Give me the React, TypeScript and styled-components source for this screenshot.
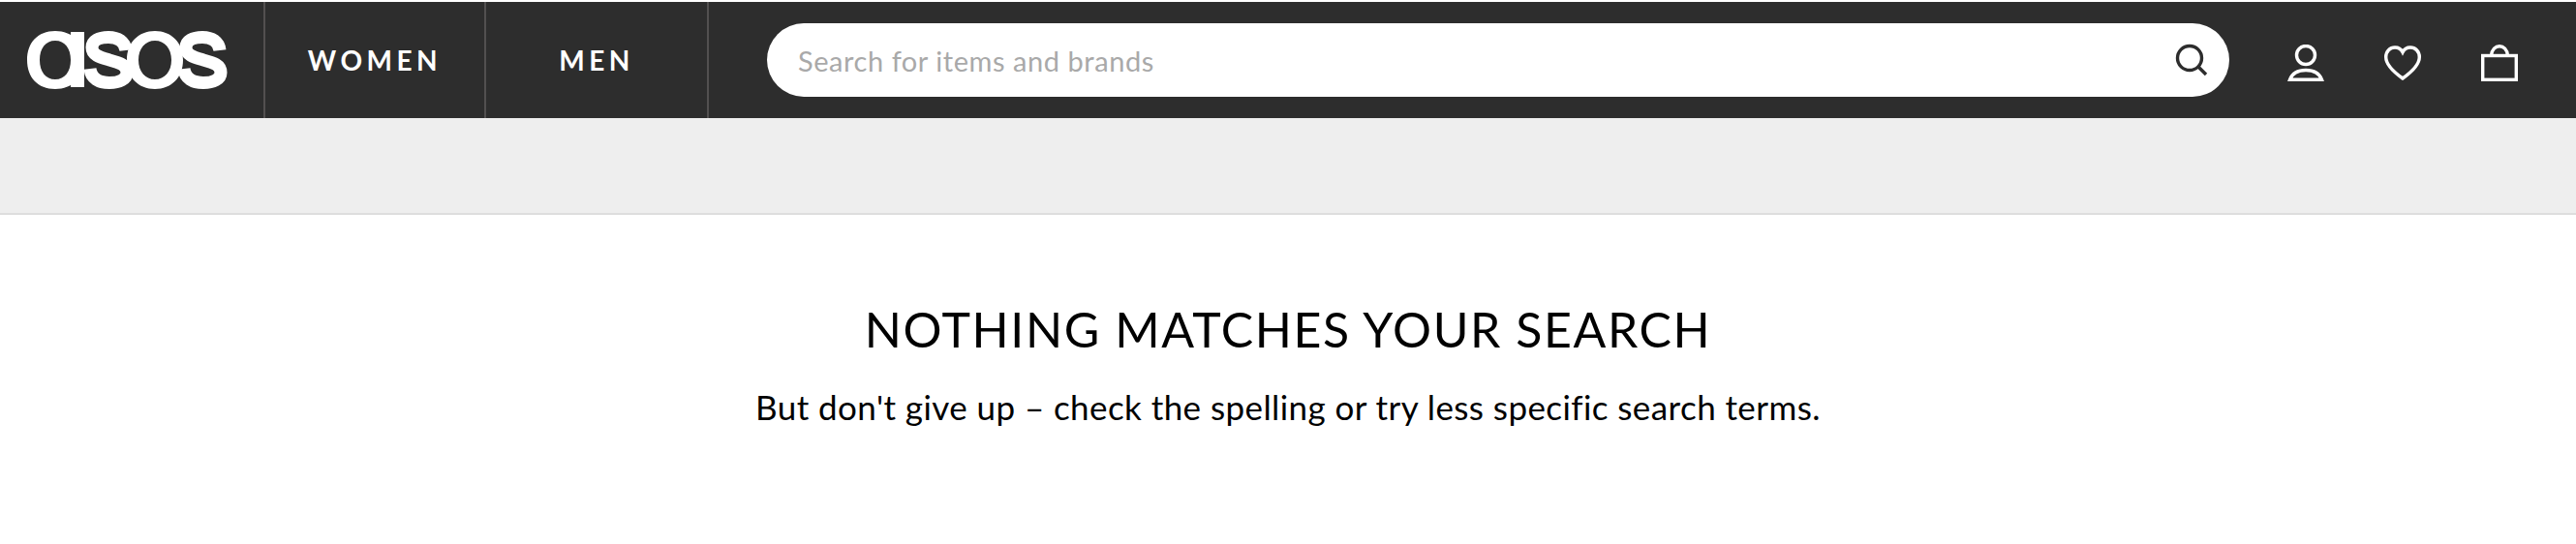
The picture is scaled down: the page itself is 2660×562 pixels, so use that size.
import React from "react";
import styled, { createGlobalStyle } from "styled-components";

const Global = createGlobalStyle`
  html, body { margin: 0; padding: 0; background: #fff; }
  body { font-family: "Lato", "Liberation Sans", sans-serif; width: 2660px; height: 562px; overflow: hidden; }
`;

const Page = styled.div`
  padding-top: 2px;
  display: flex;
  flex-direction: column;
`;

const Header = styled.header`
  height: 120px;
  background: #2d2d2d;
  display: flex;
  align-items: stretch;
`;

const LogoCell = styled.a`
  width: 272px;
  flex: none;
  display: flex;
  align-items: center;
  padding-left: 28px;
  box-sizing: border-box;
`;

const NavItem = styled.a<{ $w: number }>`
  width: ${(p) => p.$w}px;
  flex: none;
  box-sizing: border-box;
  border-left: 2px solid #525050;
  display: flex;
  align-items: center;
  justify-content: center;
  color: #fff;
  font-size: 28px;
  font-weight: 700;
  letter-spacing: 4.5px;
`;

const NavEnd = styled.div`
  width: 2px;
  background: #525050;
  flex: none;
`;

const SearchWrap = styled.div`
  margin-left: 60px;
  width: 1510px;
  height: 76px;
  flex: none;
  align-self: center;
  background: #fff;
  border-radius: 38px;
  display: flex;
  align-items: center;
  justify-content: space-between;
  padding: 0 22px 0 32px;
  box-sizing: border-box;
`;

const Placeholder = styled.span`
  color: #a9a9a9;
  font-size: 29px;
  letter-spacing: 0.55px;
`;

const Icons = styled.div`
  display: flex;
  align-items: center;
  gap: 62px;
  margin: 6px 0 0 60px;
`;

const IconBox = styled.span`
  width: 38px;
  height: 38px;
  display: block;
  color: #fff;
`;

const Band = styled.div`
  height: 98px;
  background: #eeeeee;
  border-bottom: 2px solid #dddddd;
`;

const Message = styled.main`
  display: flex;
  flex-direction: column;
  align-items: center;
  padding-top: 88px;
  color: #000;
`;

const Title = styled.h1`
  margin: 0;
  font-size: 50px;
  line-height: 60px;
  font-weight: 400;
  letter-spacing: 1.6px;
`;

const Sub = styled.p`
  margin: 28px 0 0;
  font-size: 35px;
  line-height: 44px;
  letter-spacing: 0.42px;
`;

const Logo = () => (
  <svg width="208" height="60" viewBox="0 0 208 60" role="img" aria-label="asos">
    <g fill="#fff">
      <path
        fillRule="evenodd"
        d="M29 0C11 0 0 12 0 30s11 30 29 30 29-12 29-30S47 0 29 0zm0 10c10 0 16 8 16 20s-6 20-16 20-16-8-16-20 6-20 16-20z"
      />
      <rect x="45" y="1" width="14" height="57" />
      <path
        fillRule="evenodd"
        d="M132 0c-17 0-29 12-29 30s12 30 29 30 29-12 29-30S149 0 132 0zm0 10c10 0 17 8 17 20s-7 20-17 20-17-8-17-20 7-20 17-20z"
      />
    </g>
    <g fill="none" stroke="#fff" strokeWidth="13">
      <path d="M102 20C101 11 94 6.500 84 6.500 74 6.500 67 10 67 17c0 8 8 10 18 13 11 3 18 5 18 13 0 7-8 10.500-18 10.500C74 53.500 66 49 65 39" />
      <path d="M199 20C198 11 191 6.500 181 6.500 171 6.500 164 10 164 17c0 8 8 10 18 13 11 3 18 5 18 13 0 7-8 10.500-18 10.500C171 53.500 163 49 162 39" />
    </g>
  </svg>
);

export default function App() {
  return (
    <Page>
      <Global />
      <Header>
        <LogoCell>
          <Logo />
        </LogoCell>
        <NavItem $w={228}>WOMEN</NavItem>
        <NavItem $w={230}>MEN</NavItem>
        <NavEnd />
        <SearchWrap>
          <Placeholder>Search for items and brands</Placeholder>
          <svg width="34" height="34" viewBox="0 0 34 34" fill="none" stroke="#2d2d2d" strokeWidth="3.4">
            <circle cx="15" cy="15" r="12.500" />
            <path d="M24 24l8 8" />
          </svg>
        </SearchWrap>
        <Icons>
          <IconBox>
            <svg width="38" height="38" viewBox="0 0 38 38" fill="none" stroke="#fff" strokeWidth="3.4">
              <circle cx="19" cy="11" r="9.500" />
              <path d="M2.500 36.300C5 29.500 11 26.500 19 26.500s14 3 16.500 9.800z" />
            </svg>
          </IconBox>
          <IconBox>
            <svg width="38" height="38" viewBox="0 0 38 38" fill="none" stroke="#fff" strokeWidth="3.4">
              <path d="M19 35C12 30 1.700 21 1.700 13 1.700 7 6 3 11 3c3.500 0 6.500 2 8 5 1.500-3 4.500-5 8-5 5 0 9.300 4 9.300 10 0 8-10.300 17-17.300 22z" />
            </svg>
          </IconBox>
          <IconBox>
            <svg width="38" height="38" viewBox="0 0 38 38" fill="none" stroke="#fff" strokeWidth="3.4">
              <rect x="1.700" y="11.500" width="34.600" height="24.800" />
              <path d="M10.500 11.500C11 5 15 1.700 19 1.700s8 3.300 8.500 9.800" />
            </svg>
          </IconBox>
        </Icons>
      </Header>
      <Band />
      <Message>
        <Title>NOTHING MATCHES YOUR SEARCH</Title>
        <Sub>But don't give up – check the spelling or try less specific search terms.</Sub>
      </Message>
    </Page>
  );
}
